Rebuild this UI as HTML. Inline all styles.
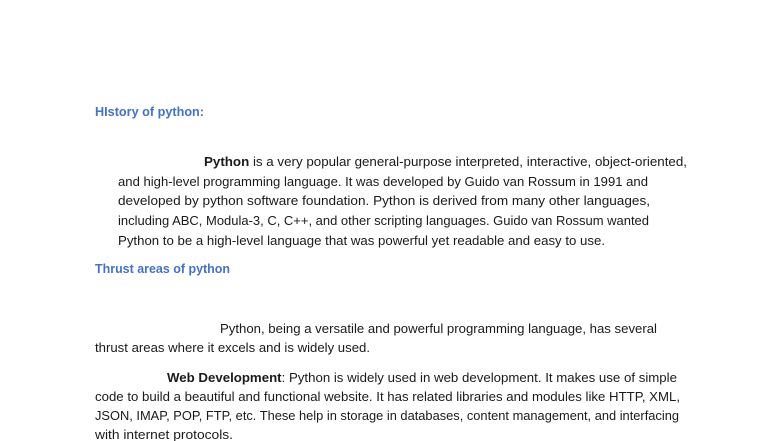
<!DOCTYPE html>
<html><head><meta charset="utf-8"><style>
html,body{margin:0;padding:0;background:#fff;width:784px;height:441px;overflow:hidden}
svg{display:block}
text{font-family:"Liberation Sans",sans-serif;font-size:13px;fill:#1a1a1a}
.h{fill:#4472c4;font-weight:bold}
b{font-weight:bold}
</style></head><body>
<svg width="784" height="441" xmlns="http://www.w3.org/2000/svg">
<text class="h" x="95" y="116" textLength="109" lengthAdjust="spacingAndGlyphs">HIstory of python:</text>
<text x="204" y="166" textLength="483" lengthAdjust="spacingAndGlyphs"><tspan font-weight="bold">Python</tspan> is a very popular general-purpose interpreted, interactive, object-oriented,</text>
<text x="118" y="186" textLength="530" lengthAdjust="spacingAndGlyphs">and high-level programming language. It was developed by Guido van Rossum in 1991 and</text>
<text x="118" y="205" textLength="532" lengthAdjust="spacingAndGlyphs">developed by python software foundation.  Python is derived from many other languages,</text>
<text x="118" y="225" textLength="531" lengthAdjust="spacingAndGlyphs">including ABC, Modula-3, C, C++, and other scripting languages. Guido van Rossum wanted</text>
<text x="118" y="245" textLength="487" lengthAdjust="spacingAndGlyphs">Python to be a high-level language that was powerful yet readable and easy to use.</text>
<text class="h" x="95" y="273" textLength="135" lengthAdjust="spacingAndGlyphs">Thrust areas of python</text>
<text x="220" y="333" textLength="437" lengthAdjust="spacingAndGlyphs">Python, being a versatile and powerful programming language, has several</text>
<text x="95" y="352" textLength="275" lengthAdjust="spacingAndGlyphs">thrust areas where it excels and is widely used.</text>
<text x="167" y="382" textLength="510" lengthAdjust="spacingAndGlyphs"><tspan font-weight="bold">Web Development</tspan>:  Python is widely used in web development. It makes use of simple</text>
<text x="95" y="401" textLength="585" lengthAdjust="spacingAndGlyphs">code to build a beautiful and functional website. It has related libraries and modules like HTTP, XML,</text>
<text x="95" y="420" textLength="584" lengthAdjust="spacingAndGlyphs">JSON, IMAP, POP, FTP, etc. These help in storage in databases, content management, and interfacing</text>
<text x="95" y="439" textLength="138" lengthAdjust="spacingAndGlyphs">with internet protocols.</text>
</svg>
</body></html>
